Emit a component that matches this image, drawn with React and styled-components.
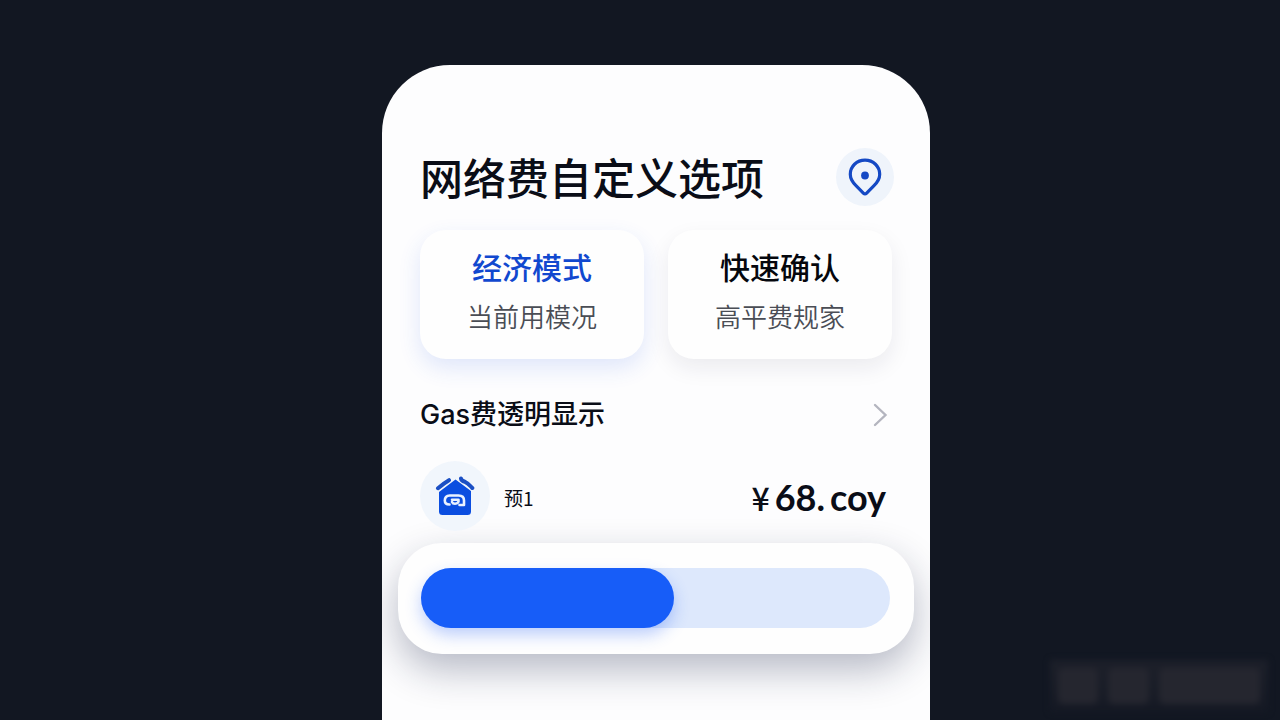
import React from 'react';
import styled, { createGlobalStyle } from 'styled-components';

const GlobalStyle = createGlobalStyle`
  * {
    box-sizing: border-box;
  }

  body {
    margin: 0;
    background: #121722;
    color: #0a0d17;
    font-family: Inter, "Noto Sans CJK SC", sans-serif;
  }

  button {
    font-family: inherit;
    color: inherit;
    border: none;
    padding: 0;
    cursor: pointer;
  }
`;

// --- Layout ---
const Page = styled.div`
  position: relative;
  display: flex;
  justify-content: center;
  min-height: 100vh;
  padding: 65px 0 0 32px;
  overflow: hidden;
`;

const Panel = styled.main`
  width: 100%;
  max-width: 548px;
  padding: 83px 16px 65px;
  background: #fdfdfe;
  border-radius: 68px 68px 0 0;
  overflow: hidden;
`;

const Section = styled.section`
  padding: 0 22px;
`;

const Header = styled.header`
  display: flex;
  align-items: center;
  justify-content: space-between;
  height: 58px;
  padding: 0 20px 0 22px;
`;

const Title = styled.h1`
  margin: 0;
  padding-top: 4px;
  font-size: 43px;
  line-height: 60px;
  font-weight: 500;
`;

const RoundButton = styled.button`
  display: flex;
  align-items: center;
  justify-content: center;
  width: 58px;
  height: 58px;
  border-radius: 50%;
  background: #eff4fb;
`;

// --- Mode cards ---
const Modes = styled.div`
  display: grid;
  grid-template-columns: 1fr 1fr;
  gap: 24px;
  margin-top: 24px;
`;

const ModeCard = styled.button`
  display: flex;
  flex-direction: column;
  align-items: center;
  height: 129px;
  padding-top: 16px;
  border-radius: 26px;
  background: #fefefe;
  box-shadow: 0 9px 22px ${({ $active }) => ($active ? 'rgba(40, 95, 230, 0.14)' : 'rgba(20, 30, 60, 0.08)')};
`;

const ModeName = styled.span`
  font-size: 30px;
  line-height: 44px;
  font-weight: 500;
  color: ${({ $active }) => ($active ? '#1148cf' : '#05070d')};
`;

const ModeNote = styled.span`
  margin-top: 9px;
  font-size: 26px;
  line-height: 38px;
  font-weight: 350;
  color: #4a4d55;
`;

// --- Fee rows ---
const FeeLink = styled.a`
  display: flex;
  align-items: center;
  justify-content: space-between;
  margin-top: 36px;
  font-size: 27px;
  line-height: 40px;
  font-weight: 500;
  color: inherit;
  text-decoration: none;
`;

const FeeRow = styled.div`
  display: flex;
  align-items: center;
  height: 72px;
  margin-top: 25px;
  padding-right: 6px;
`;

const FeeIcon = styled.span`
  display: flex;
  align-items: center;
  justify-content: center;
  width: 70px;
  height: 70px;
  border-radius: 50%;
  background: #f1f6fc;
`;

const FeeLabel = styled.span`
  margin-left: 14px;
  padding-top: 4px;
  font-family: "Noto Sans CJK SC", sans-serif;
  font-size: 19px;
  line-height: 28px;
`;

const FeeAmount = styled.strong`
  display: flex;
  align-items: baseline;
  gap: 5px;
  margin-left: auto;
  padding-top: 2px;
  font-family: Lato, sans-serif;
  font-size: 36px;
  line-height: 44px;
  font-weight: 700;
`;

const Currency = styled.span`
  font-family: "Noto Sans CJK SC", sans-serif;
  font-size: 32px;
  font-weight: 500;
`;

// --- Progress ---
const ProgressCard = styled.div`
  margin-top: 11px;
  padding: 25px 24px 26px 23px;
  border-radius: 44px;
  background: #fefefe;
  box-shadow: 0 16px 38px rgba(20, 30, 65, 0.3);
`;

const Track = styled.div`
  height: 60px;
  border-radius: 30px;
  background: #dde8fc;
`;

const Fill = styled.div`
  height: 100%;
  border-radius: 30px;
  background: #175df8;
  box-shadow: 0 7px 16px rgba(35, 95, 250, 0.3);
`;

// --- Blurred plate in the page corner ---
const Smudge = styled.div`
  position: absolute;
  right: 12px;
  bottom: 8px;
  display: flex;
  gap: 10px;
  width: 218px;
  height: 52px;
  padding: 8px;
  background: linear-gradient(#1d202a, #151924);
  filter: blur(3px);
`;

const SmudgeBlock = styled.span`
  flex: ${({ $grow }) => $grow};
  border-radius: 6px;
  background: #25262f;
`;

const PinIcon = () => (
  <svg width="36" height="40" viewBox="0 0 36 40" fill="none" aria-hidden="true">
    <path
      d="M18 3.200C9.700 3.200 3.300 9.300 3.300 17.300c0 4.800 2.200 8 5.700 11.300l7.600 7.700c.8.800 2 .8 2.800 0l7.600-7.700c3.500-3.300 5.700-6.500 5.700-11.300C32.700 9.300 26.300 3.200 18 3.200Z"
      stroke="#1549c4"
      strokeWidth="3.200"
    />
    <circle cx="18" cy="18.500" r="3.900" fill="#1549c4" />
  </svg>
);

const HouseIcon = () => (
  <svg width="40" height="40" viewBox="0 0 40 40" fill="none" aria-hidden="true">
    <path d="M20.500 3.500 36 15v20.500a3.500 3.500 0 0 1-3.500 3.500h-25A3.500 3.500 0 0 1 4 35.500V16Z" fill="#0b4ee0" />
    <path
      d="M3 12.200C7 8.800 10 6.500 14 4.200M26 2.500c.2 2.200 2 2.700 4 3.300 3 1.200 5 3.800 7.300 6.200"
      stroke="#1b4fc4"
      strokeWidth="4"
      strokeLinecap="round"
    />
    <path
      d="M14.500 28.500c-3 0-4.700-1.300-4.700-4 0-3 2-4.800 5-5h8.700c3.500 0 5.500 1.800 5.500 5V29h-4.500M17 23.800h6.500c.5 2.500-1 4-3.500 4-1.500 0-2.500-.6-3-1.800"
      stroke="#eaf2ff"
      strokeWidth="2.600"
      strokeLinecap="round"
      strokeLinejoin="round"
    />
  </svg>
);

const ChevronIcon = () => (
  <svg width="20" height="26" viewBox="0 0 20 26" fill="none" aria-hidden="true">
    <path d="M3 3l10.500 10L3 23" stroke="#b4b5bf" strokeWidth="2.400" strokeLinecap="round" />
  </svg>
);

const modes = [
  { name: '经济模式', note: '当前用模况', active: true },
  { name: '快速确认', note: '高平费规家', active: false },
];

const App = () => {
  const progress = 54;

  return (
    <Page>
      <GlobalStyle />
      <Panel>
        <Header>
          <Title>网络费自定义选项</Title>
          <RoundButton type="button" aria-label="位置">
            <PinIcon />
          </RoundButton>
        </Header>
        <Section>
          <Modes>
            {modes.map((mode) => (
              <ModeCard key={mode.name} type="button" aria-pressed={mode.active} $active={mode.active}>
                <ModeName $active={mode.active}>{mode.name}</ModeName>
                <ModeNote>{mode.note}</ModeNote>
              </ModeCard>
            ))}
          </Modes>
          <FeeLink href="#gas">
            Gas费透明显示
            <ChevronIcon />
          </FeeLink>
          <FeeRow>
            <FeeIcon>
              <HouseIcon />
            </FeeIcon>
            <FeeLabel>预1</FeeLabel>
            <FeeAmount>
              <Currency>¥</Currency>
              <span>68.</span>
              <span>coy</span>
            </FeeAmount>
          </FeeRow>
        </Section>
        <ProgressCard>
          <Track
            role="progressbar"
            aria-label="网络费"
            aria-valuenow={progress}
            aria-valuemin={0}
            aria-valuemax={100}
          >
            <Fill style={{ width: `${progress}%` }} />
          </Track>
        </ProgressCard>
      </Panel>
      <Smudge aria-hidden="true">
        <SmudgeBlock $grow={2} />
        <SmudgeBlock $grow={2} />
        <SmudgeBlock $grow={5} />
      </Smudge>
    </Page>
  );
};

export default App;
